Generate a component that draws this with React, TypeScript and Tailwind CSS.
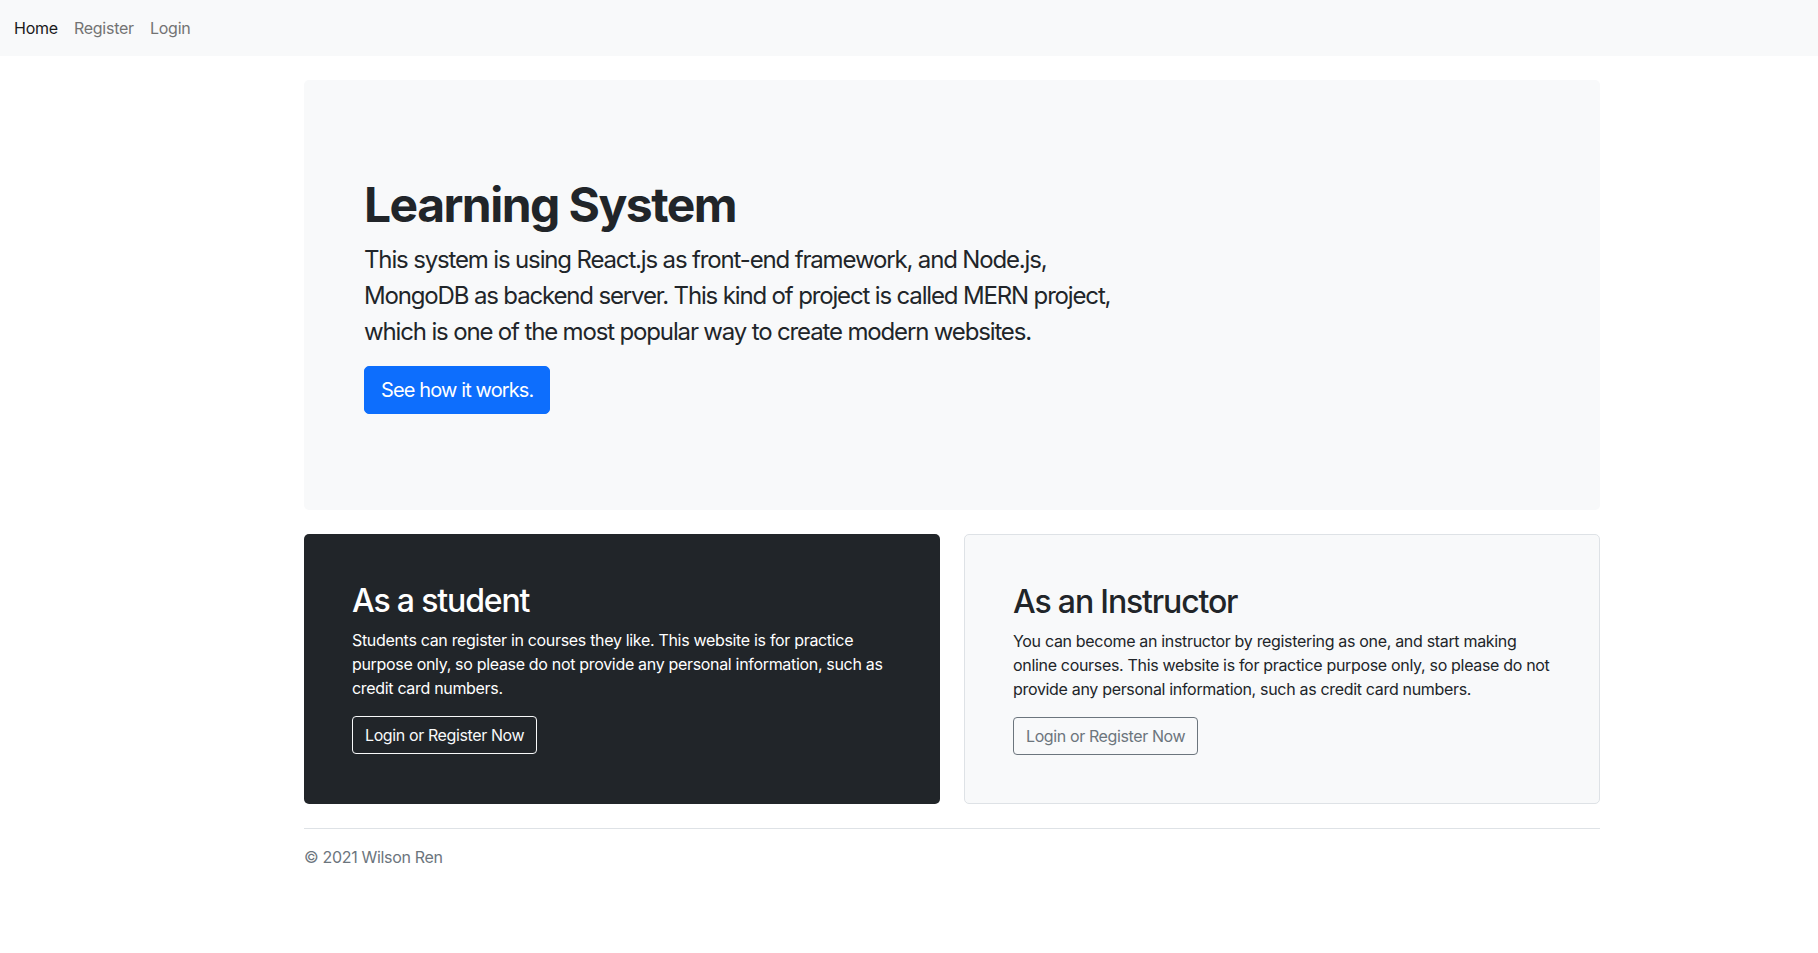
import React from "react";

export default function App() {
  return (
    <div className="min-h-screen bg-white text-[#212529] font-['Inter','Noto_Sans',sans-serif] text-base leading-6">
      <nav className="h-14 bg-[#f8f9fa] flex items-center px-[14px] gap-4 tracking-[-0.015em]">
        <a className="text-[#1a1a1a] leading-6">Home</a>
        <a className="text-[#737373] leading-6">Register</a>
        <a className="text-[#737373] leading-6">Login</a>
      </nav>
      <main className="ml-[304px] w-[1296px] pt-6">
        <section className="bg-[#f8f9fa] rounded-[5px] px-[60px] py-24">
          <h1 className="text-[48px] font-bold leading-[1.2] mb-2 tracking-[-0.032em]">Learning System</h1>
          <p className="w-[784px] text-2xl leading-9 mb-4 tracking-[-0.048em]">
            This system is using React.js as front-end framework, and Node.js, MongoDB as backend server. This kind of
            project is called MERN project, which is one of the most popular way to create modern websites.
          </p>
          <button className="bg-[#0d6efd] border border-[#0d6efd] text-white text-xl leading-[30px] px-4 py-2 rounded-[5px] tracking-[-0.044em]">
            See how it works.
          </button>
        </section>
        <div className="grid grid-cols-2 gap-6 mt-6">
          <div className="bg-[#212529] text-white p-12 rounded-[5px]">
            <h2 className="text-[32px] font-medium leading-[1.2] mb-2 tracking-[-0.036em]">As a student</h2>
            <p className="mb-4 tracking-[-0.02em]">
              Students can register in courses they like. This website is for practice purpose only, so please do not
              provide any personal information, such as credit card numbers.
            </p>
            <button className="border border-[#f8f9fa] text-[#f8f9fa] px-3 py-1.5 rounded-[4px] leading-6 tracking-[-0.024em]">
              Login or Register Now
            </button>
          </div>
          <div className="bg-[#f8f9fa] border border-[#dee2e6] p-12 rounded-[5px]">
            <h2 className="text-[32px] font-medium leading-[1.2] mb-2 tracking-[-0.036em]">As an Instructor</h2>
            <p className="mb-4 tracking-[-0.02em]">
              You can become an instructor by registering as one, and start making online courses. This website is for
              practice purpose only, so please do not provide any personal information, such as credit card numbers.
            </p>
            <button className="border border-[#6c757d] text-[#6c757d] px-3 py-1.5 rounded-[4px] leading-6 tracking-[-0.024em]">
              Login or Register Now
            </button>
          </div>
        </div>
        <footer className="mt-6 border-t border-[#dee2e6] pt-4 text-[#6c757d] tracking-[-0.02em]">© 2021 Wilson Ren</footer>
      </main>
    </div>
  );
}
